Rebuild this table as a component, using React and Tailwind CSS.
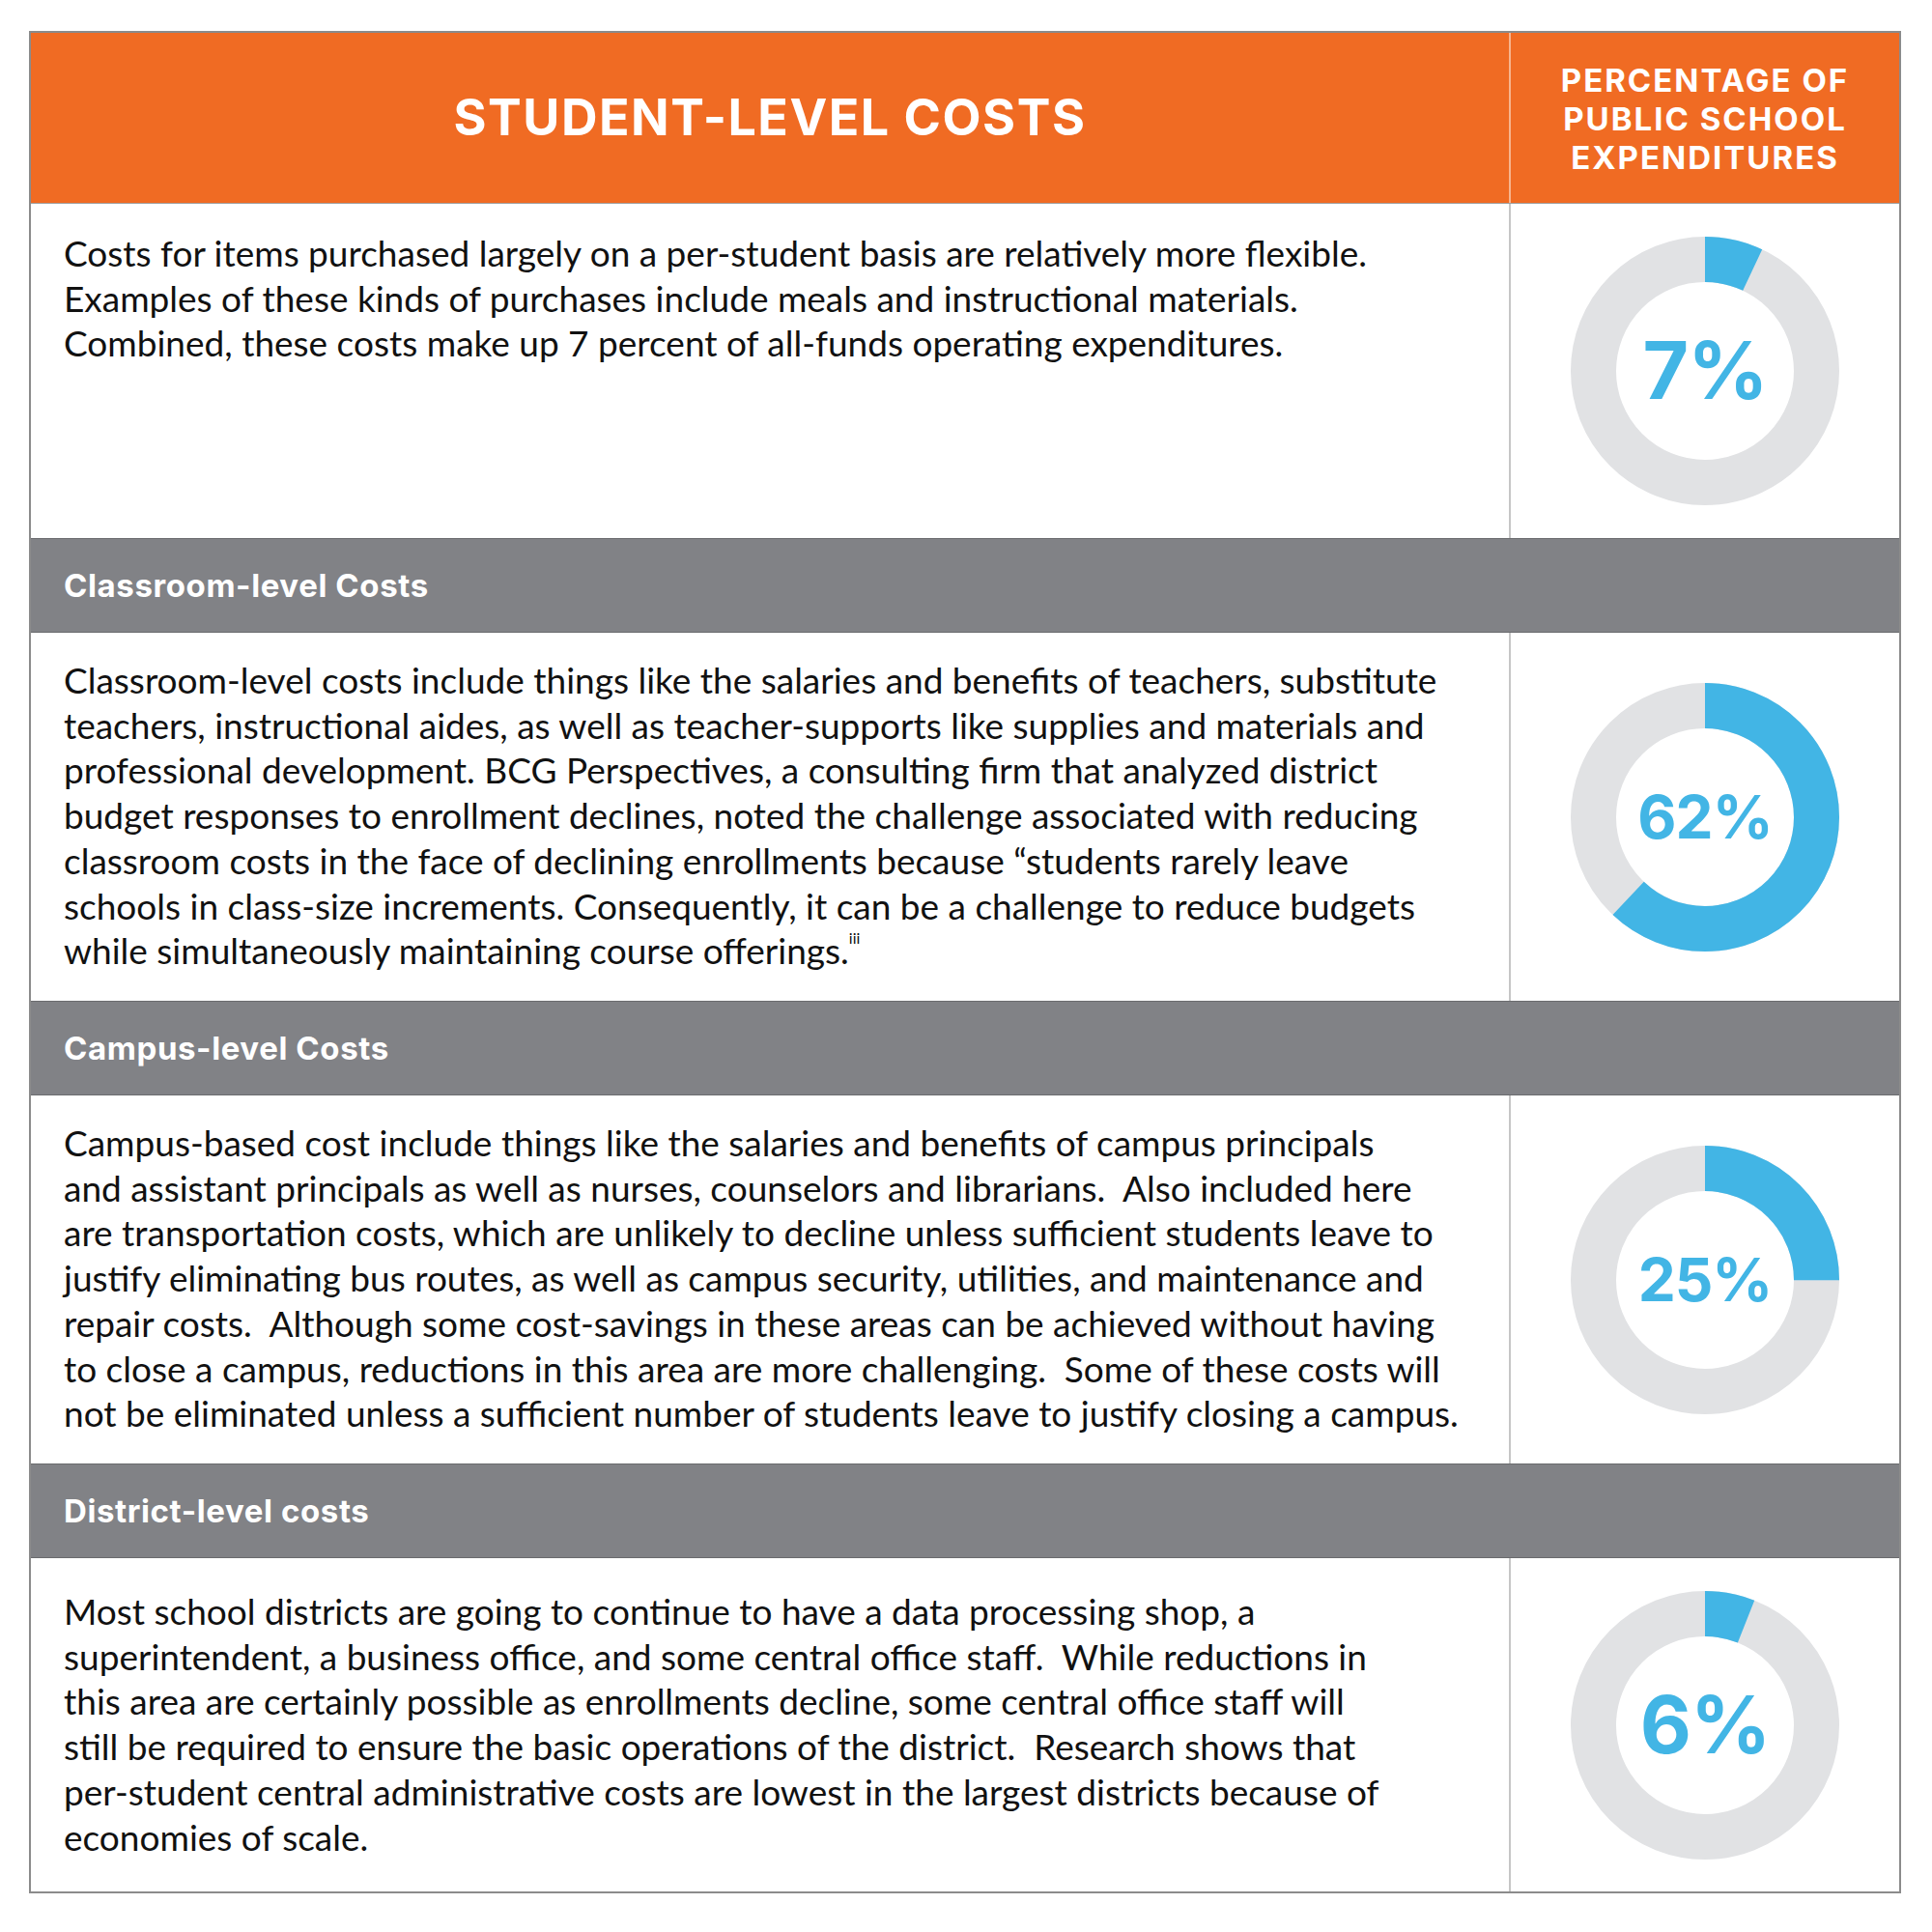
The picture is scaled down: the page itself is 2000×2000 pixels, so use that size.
const ORANGE = "#f06b23";

const rows = [
  {
    band: null,
    pct: 7,
    h: "h-[346px]",
    pt: "pt-[28px]",
    big: true,
    lines: [
      "Costs for items purchased largely on a per-student basis are relatively more flexible.",
      "Examples of these kinds of purchases include meals and instructional materials.",
      "Combined, these costs make up 7 percent of all-funds operating expenditures.",
    ],
  },
  {
    band: "Classroom-level Costs",
    pct: 62,
    h: "h-[381px]",
    pt: "pt-[26px]",
    big: false,
    lines: [
      "Classroom-level costs include things like the salaries and benefits of teachers, substitute",
      "teachers, instructional aides, as well as teacher-supports like supplies and materials and",
      "professional development. BCG Perspectives, a consulting firm that analyzed district",
      "budget responses to enrollment declines, noted the challenge associated with reducing",
      "classroom costs in the face of declining enrollments because \u201cstudents rarely leave",
      "schools in class-size increments. Consequently, it can be a challenge to reduce budgets",
      "while simultaneously maintaining course offerings.",
    ],
    sup: "iii",
  },
  {
    band: "Campus-level Costs",
    pct: 25,
    h: "h-[381px]",
    pt: "pt-[26px]",
    big: false,
    lines: [
      "Campus-based cost include things like the salaries and benefits of campus principals",
      "and assistant principals as well as nurses, counselors and librarians.  Also included here",
      "are transportation costs, which are unlikely to decline unless sufficient students leave to",
      "justify eliminating bus routes, as well as campus security, utilities, and maintenance and",
      "repair costs.  Although some cost-savings in these areas can be achieved without having",
      "to close a campus, reductions in this area are more challenging.  Some of these costs will",
      "not be eliminated unless a sufficient number of students leave to justify closing a campus.",
    ],
  },
  {
    band: "District-level costs",
    pct: 6,
    h: "h-[345px]",
    pt: "pt-[32px]",
    big: true,
    lines: [
      "Most school districts are going to continue to have a data processing shop, a",
      "superintendent, a business office, and some central office staff.  While reductions in",
      "this area are certainly possible as enrollments decline, some central office staff will",
      "still be required to ensure the basic operations of the district.  Research shows that",
      "per-student central administrative costs are lowest in the largest districts because of",
      "economies of scale.",
    ],
  },
];

function Donut({ pct, big }) {
  const r = 115.5;
  const c = 2 * Math.PI * r;
  return (
    <div className="grid place-items-center">
      <svg width="278" height="278" viewBox="0 0 278 278" className="col-start-1 row-start-1">
        <circle cx="139" cy="139" r={r} fill="none" stroke="#e1e2e4" strokeWidth="47" />
        <circle
          cx="139"
          cy="139"
          r={r}
          fill="none"
          stroke="#42b5e5"
          strokeWidth="47"
          strokeDasharray={`${(c * pct) / 100} ${c}`}
          transform="rotate(-90 139 139)"
        />
      </svg>
      <span
        className={`col-start-1 row-start-1 font-[Inter,sans-serif] font-bold text-[#42b5e5] leading-none ${
          big ? "text-[82px] tracking-[-1px]" : "text-[62px] tracking-[-1px]"
        }`}
      >
        {pct}%
      </span>
    </div>
  );
}

export default function App() {
  return (
    <div className="w-[2000px] h-[2000px] bg-white pt-[32px] pl-[30px]">
      <div className="w-[1938px] border-2 border-[#8b8b8b]">
        {/* header */}
        <div className="grid grid-cols-[1530px_1fr] h-[177px] border-b border-[#a0a0a0]" style={{ background: ORANGE }}>
          <div className="flex items-center justify-center">
            <h1 className="font-[Inter,sans-serif] font-bold text-white text-[52px] tracking-[1.5px] leading-none">
              STUDENT-LEVEL COSTS
            </h1>
          </div>
          <div className="border-l-2 border-[#f7b48f] flex items-center justify-center pt-[2px]">
            <p className="font-[Inter,sans-serif] font-bold text-white text-[33px] tracking-[2px] leading-[40px] text-center">
              PERCENTAGE OF
              <br />
              PUBLIC SCHOOL
              <br />
              EXPENDITURES
            </p>
          </div>
        </div>

        {rows.map((row, i) => (
          <div key={i}>
            {row.band && (
              <div className="h-[98px] bg-[#818286] border-y border-[#6a6b6e] flex items-center pl-[34px]">
                <span className="font-[Inter,sans-serif] font-bold text-white text-[33px] tracking-[0.6px] leading-none">
                  {row.band}
                </span>
              </div>
            )}
            <div className={`grid grid-cols-[1530px_1fr] ${row.h}`}>
              <div className={`pl-[34px] ${row.pt} font-[Lato,sans-serif] text-[37px] leading-[46.7px] text-[#111111]`}>
                {row.lines.map((l, j) => (
                  <div key={j} className="whitespace-pre">
                    {l}
                    {row.sup && j === row.lines.length - 1 && (
                      <sup className="text-[16px] align-super">{row.sup}</sup>
                    )}
                  </div>
                ))}
              </div>
              <div className="border-l-2 border-[#c6c6c6] flex items-center justify-center">
                <Donut pct={row.pct} big={row.big} />
              </div>
            </div>
          </div>
        ))}
      </div>
    </div>
  );
}
